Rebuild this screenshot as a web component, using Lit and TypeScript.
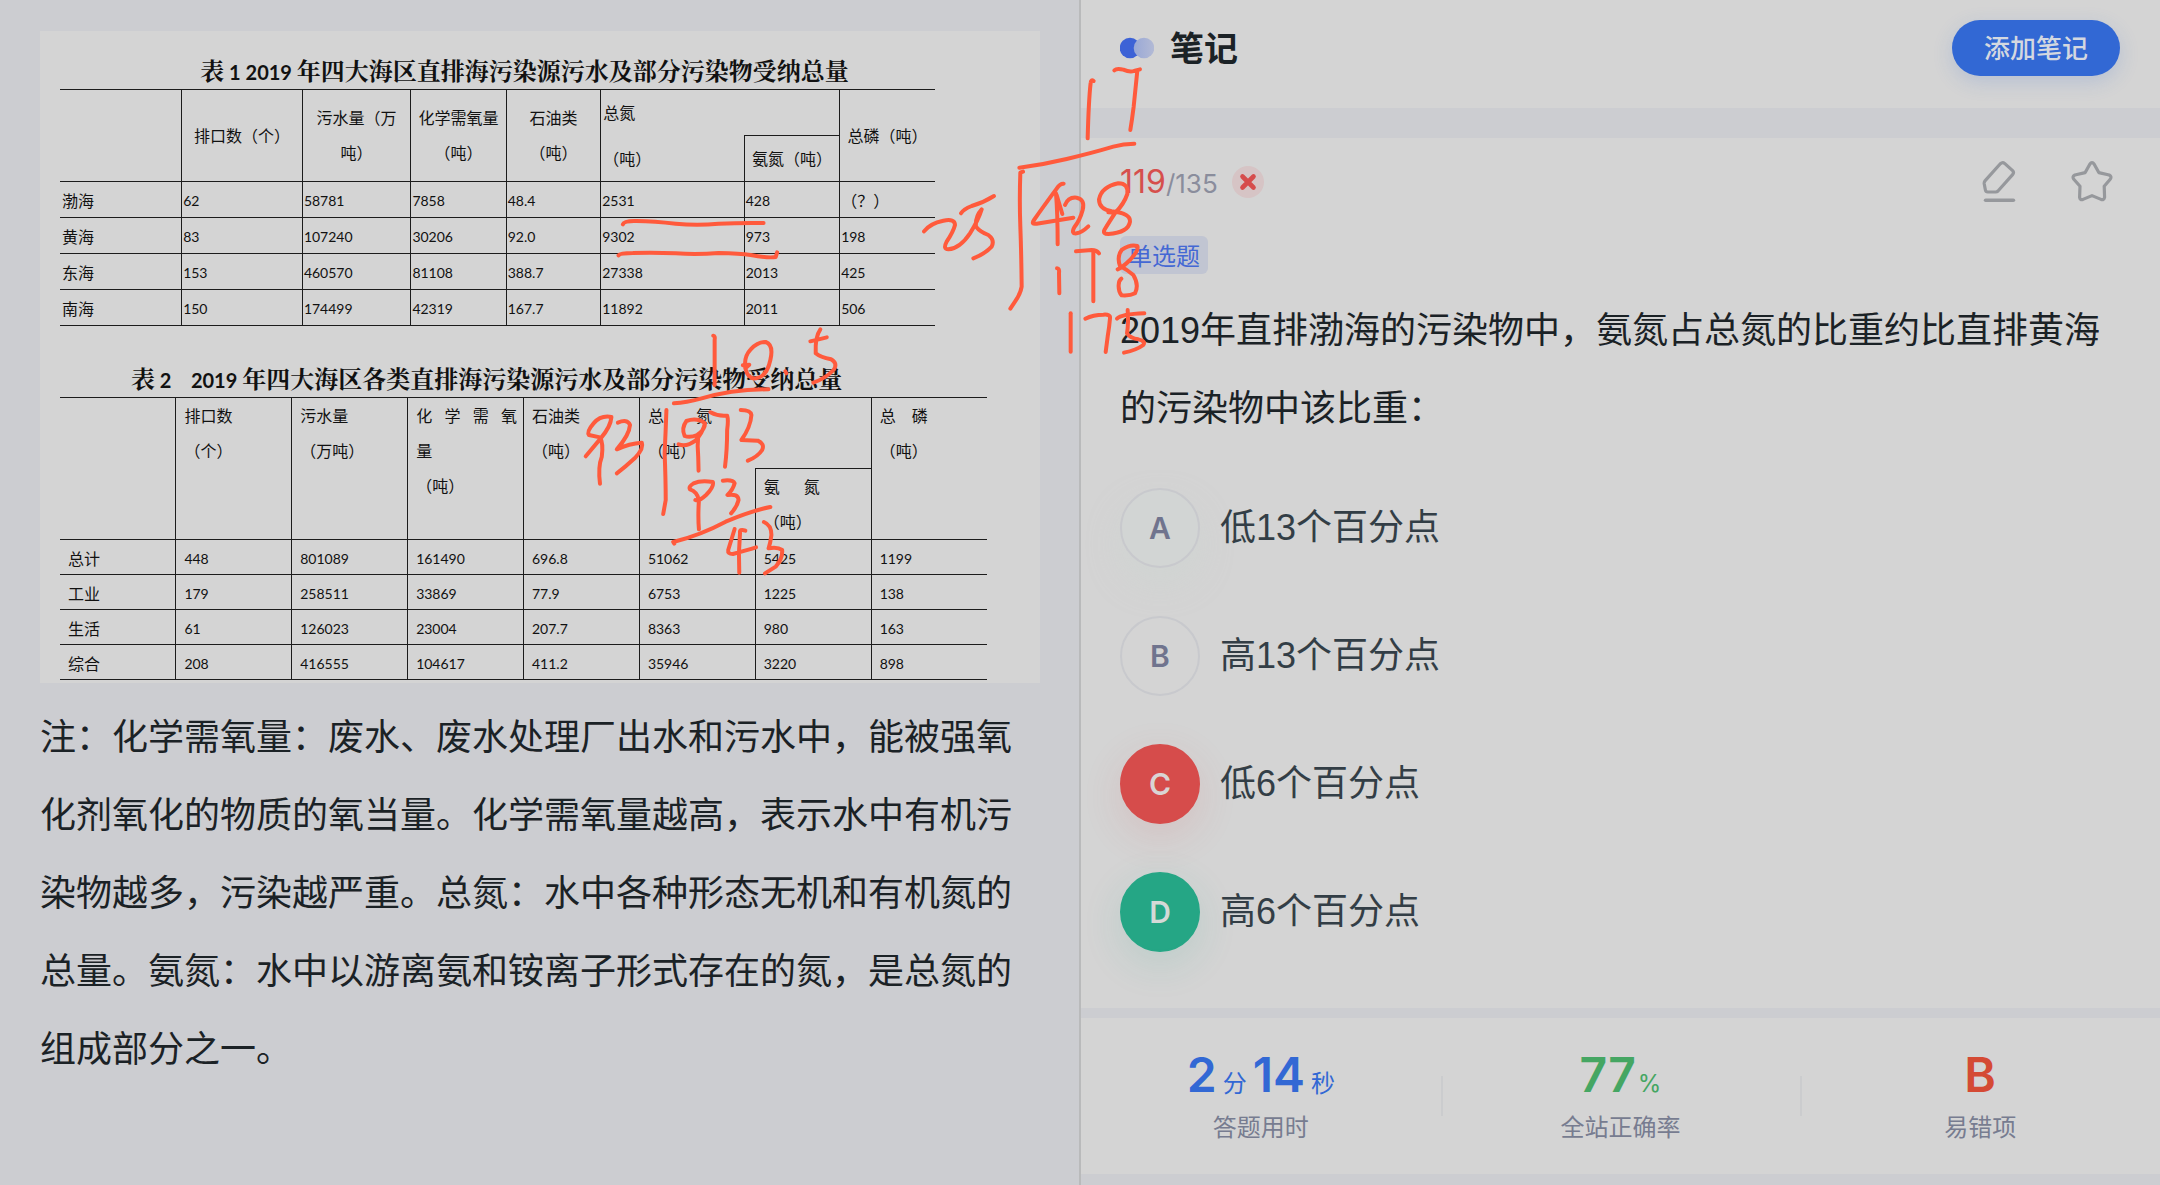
import { LitElement, html, css, svg } from "lit";
import { customElement, property } from "lit/decorators.js";

type Row = [string, ...string[]];

const seaRows: Row[] = [
  ["渤海", "62", "58781", "7858", "48.4", "2531", "428", "（？）"],
  ["黄海", "83", "107240", "30206", "92.0", "9302", "973", "198"],
  ["东海", "153", "460570", "81108", "388.7", "27338", "2013", "425"],
  ["南海", "150", "174499", "42319", "167.7", "11892", "2011", "506"],
];

const sourceRows: Row[] = [
  ["总计", "448", "801089", "161490", "696.8", "51062", "5425", "1199"],
  ["工业", "179", "258511", "33869", "77.9", "6753", "1225", "138"],
  ["生活", "61", "126023", "23004", "207.7", "8363", "980", "163"],
  ["综合", "208", "416555", "104617", "411.2", "35946", "3220", "898"],
];

const bodyRows = (rows: Row[]) =>
  rows.map(
    ([name, ...values]) => html`<tr>
      <th scope="row" class="name">${name}</th>
      ${values.map((v) => html`<td class=${/\d/.test(v) ? "num" : "name"}>${v}</td>`)}
    </tr>`
  );

@customElement("material-panel")
export class MaterialPanel extends LitElement {
  static styles = css`
    :host {
      display: block;
      padding: 31px 40px 0 40px;
      background: #cccdd1;
      color: #1b2226;
    }
    .sheet {
      background: #d4d4d4;
      padding: 14px 53px 3px 20px;
      color: #111;
    }
    table {
      border-collapse: collapse;
      table-layout: fixed;
      width: 100%;
      font: 400 16px/35px Lato, "Noto Sans CJK SC", sans-serif;
    }
    .sea {
      width: 94.4%;
    }
    caption {
      font: 700 24px/34px "Noto Serif CJK SC", "Noto Sans CJK SC", serif;
      white-space: pre;
    }
    .sea caption {
      padding: 8px 0 0 54px;
    }
    .source caption {
      padding: 35px 0 0 0;
      text-align: left;
      text-indent: 71px;
    }
    .digits {
      font: 700 20px/34px Lato, sans-serif;
    }
    th,
    td {
      border: 1px solid #1c1c1c;
      padding: 0;
      font-weight: 400;
      text-align: left;
    }
    tr > :first-child {
      border-left: 0;
    }
    tr > .edge,
    tbody tr > :last-child {
      border-right: 0;
    }
    .center {
      text-align: center;
    }
    .sea .total {
      border-bottom: 0;
      padding: 0 0 0 2px;
      height: 45px;
    }
    .sea .unit {
      border-top: 0;
      border-left: 1px solid #1c1c1c;
      padding-left: 2px;
      height: 45px;
    }
    .sea td {
      padding: 4px 0 0 1px;
      height: 31px;
    }
    .sea .name {
      padding-top: 4px;
    }
    .sea th.name {
      padding-left: 2px;
    }
    .num {
      font-size: 14px;
      line-height: 24px;
    }
    .name {
      line-height: 24px;
    }
    .source th,
    .source td {
      padding: 0 0 0 8px;
      vertical-align: top;
    }
    .source tbody th,
    .source tbody td {
      padding-top: 4px;
      height: 30px;
      vertical-align: middle;
    }
    .source .total {
      border-bottom: 0;
      height: 69px;
    }
    .source .void {
      border-top: 0;
      border-left: 1px solid #1c1c1c;
    }
    .spread {
      display: block;
      text-align-last: justify;
      margin-right: 6px;
    }
    .note {
      margin: 12px 0 0;
      font: 400 36px/78px "Noto Sans CJK SC", sans-serif;
    }
  `;

  render() {
    return html`
      <div class="sheet">
        <table class="sea">
          <caption>表<span class="digits"> 1 2019 </span>年四大海区直排海污染源污水及部分污染物受纳总量</caption>
          <colgroup>
            <col style="width:13.9%" /><col style="width:13.8%" /><col style="width:12.4%" />
            <col style="width:10.9%" /><col style="width:10.8%" /><col style="width:16.4%" />
            <col style="width:10.9%" /><col style="width:10.9%" />
          </colgroup>
          <thead>
            <tr>
              <th rowspan="2"></th>
              <th rowspan="2" class="center">排口数（个）</th>
              <th rowspan="2" class="center">污水量（万<br />吨）</th>
              <th rowspan="2" class="center">化学需氧量<br />（吨）</th>
              <th rowspan="2" class="center">石油类<br />（吨）</th>
              <th colspan="2" class="total">总氮</th>
              <th rowspan="2" class="center edge">总磷（吨）</th>
            </tr>
            <tr>
              <th class="unit">（吨）</th>
              <th class="center">氨氮（吨）</th>
            </tr>
          </thead>
          <tbody>
            ${bodyRows(seaRows)}
          </tbody>
        </table>
        <table class="source">
          <caption>表<span class="digits"> 2    2019 </span>年四大海区各类直排海污染源污水及部分污染物受纳总量</caption>
          <thead>
            <tr>
              <th rowspan="2"></th>
              <th rowspan="2">排口数<br />（个）</th>
              <th rowspan="2">污水量<br />（万吨）</th>
              <th rowspan="2"><span class="spread">化 学 需 氧</span>量<br />（吨）</th>
              <th rowspan="2">石油类<br />（吨）</th>
              <th colspan="2" class="total">总　　氮<br />（吨）</th>
              <th rowspan="2" class="edge">总　磷<br />（吨）</th>
            </tr>
            <tr>
              <th class="void"></th>
              <th>氨　&ensp;氮<br />（吨）</th>
            </tr>
          </thead>
          <tbody>
            ${bodyRows(sourceRows)}
          </tbody>
        </table>
      </div>
      <p class="note">
        注：化学需氧量：废水、废水处理厂出水和污水中，能被强氧化剂氧化的物质的氧当量。化学需氧量越高，表示水中有机污染物越多，污染越严重。总氮：水中各种形态无机和有机氮的总量。氨氮：水中以游离氨和铵离子形式存在的氮，是总氮的组成部分之一。
      </p>
    `;
  }
}

@customElement("answer-option")
export class AnswerOption extends LitElement {
  @property() letter = "";
  @property() label = "";
  @property({ reflect: true }) state = "";

  static styles = css`
    :host {
      display: block;
    }
    button {
      display: flex;
      align-items: center;
      gap: 20px;
      width: 100%;
      padding: 0;
      border: 0;
      background: none;
      text-align: left;
      color: #333e46;
      font: 400 36px/80px "Liberation Sans", "Noto Sans CJK SC", sans-serif;
    }
    .disc {
      box-sizing: border-box;
      width: 80px;
      height: 80px;
      border: 2px solid #c8c9cd;
      border-radius: 50%;
      text-align: center;
      color: #70748e;
      font: 600 30px/76px Inter, sans-serif;
    }
    :host([state="plain"]) .disc {
      background: #d2d5d4;
      box-shadow: 0 16px 30px rgba(205, 213, 209, 0.5);
    }
    :host([state="wrong"]) .disc {
      border-color: #d64c4b;
      background: #d64c4b;
      color: #d9d4d4;
      box-shadow: 0 12px 40px rgba(214, 76, 75, 0.14);
    }
    :host([state="right"]) .disc {
      border-color: #25a685;
      background: #25a685;
      color: #d4d9d7;
      box-shadow: 0 12px 40px rgba(37, 166, 133, 0.14);
    }
  `;

  render() {
    return html`<button type="button"><span class="disc">${this.letter}</span><span>${this.label}</span></button>`;
  }
}

@customElement("question-panel")
export class QuestionPanel extends LitElement {
  static styles = css`
    :host {
      display: flex;
      flex-direction: column;
      margin-left: -1px;
      background: #cccdd1;
      border-left: 2px solid #b9babb;
      color: #1b2226;
      font-family: "Liberation Sans", "Noto Sans CJK SC", sans-serif;
    }
    header {
      display: flex;
      align-items: center;
      gap: 16px;
      padding: 0 40px 12px 39px;
      height: 96px;
      background: #d4d4d4;
    }
    h1 {
      flex: 1;
      margin: 0;
      padding-bottom: 2px;
      font: 700 34px/48px "Noto Sans CJK SC", sans-serif;
    }
    .add {
      width: 168px;
      height: 56px;
      padding: 0 0 2px;
      border: 0;
      border-radius: 28px;
      background: #3268d4;
      color: #d4d8e0;
      font: 500 26px/54px "Noto Sans CJK SC", sans-serif;
      box-shadow: 0 6px 20px rgba(50, 104, 212, 0.18);
    }
    .question {
      flex: 1;
      margin-top: 30px;
      padding: 20px 40px 0 39px;
      background: #d4d4d4;
    }
    .top {
      display: flex;
      align-items: center;
      height: 48px;
      padding-right: 4px;
    }
    .count {
      margin-right: 14px;
      padding-top: 2px;
      color: #8a8d9c;
      font: 400 26px/48px Inter, sans-serif;
    }
    .current {
      color: #d64f4c;
      font-size: 32px;
    }
    .spacer {
      flex: 1;
    }
    .icon {
      display: block;
      padding: 0;
      border: 0;
      background: none;
      height: 44px;
    }
    .icon + .icon {
      margin-left: 51px;
    }
    svg {
      display: block;
    }
    .tag {
      display: inline-block;
      margin-top: 30px;
      padding: 0 8px;
      border-radius: 6px;
      background: #c1c5d2;
      color: #4468d4;
      font: 400 24px/38px "Noto Sans CJK SC", sans-serif;
      vertical-align: top;
    }
    .stem {
      margin: 18px 0 40px;
      font-size: 36px;
      line-height: 78px;
    }
    .options {
      display: grid;
      gap: 48px;
    }
    .stats {
      display: grid;
      grid-template-columns: repeat(3, 1fr);
      margin: 10px 0 11px;
      padding: 24px 0 30px;
      background: #d4d4d4;
      text-align: center;
    }
    .stat {
      display: grid;
      align-content: start;
      position: relative;
    }
    .stat + .stat::before {
      content: "";
      position: absolute;
      left: 0;
      top: 34px;
      width: 2px;
      height: 40px;
      background: #cbccce;
    }
    .value {
      font: 600 48px/66px Inter, "Noto Sans CJK SC", sans-serif;
    }
    .unit {
      font: 400 24px/30px Inter, "Noto Sans CJK SC", sans-serif;
      margin: 0 6px;
    }
    .percent {
      margin: 0 0 0 2px;
    }
    .last {
      margin-right: 0;
    }
    .time {
      color: #3268d4;
    }
    .rate {
      color: #45a663;
    }
    .trap {
      color: #d44a34;
    }
    .label {
      color: #777c90;
      font: 400 24px/36px "Noto Sans CJK SC", sans-serif;
    }
  `;

  render() {
    return html`
      <header>
        <svg width="34" height="22" viewBox="0 0 34 22" aria-hidden="true">
          <defs>
            <linearGradient id="fade">
              <stop offset="0" stop-color="#99a8d6" />
              <stop offset="1" stop-color="#b3bad5" />
            </linearGradient>
          </defs>
          <circle cx="10" cy="11" r="10.3" fill="#3d62d6" />
          <circle cx="24" cy="11" r="10.3" fill="url(#fade)" />
        </svg>
        <h1>笔记</h1>
        <button class="add" type="button">添加笔记</button>
      </header>
      <section class="question">
        <div class="top">
          <span class="count"><span class="current">119</span>/135</span>
          <svg width="32" height="32" viewBox="0 0 32 32" aria-hidden="true">
            <circle cx="16" cy="16" r="16" fill="#d6c4c5" />
            <path d="M10.5 10.5 21.5 21.5M21.5 10.5 10.5 21.5" stroke="#d64c4c" stroke-width="4.6" stroke-linecap="round" />
          </svg>
          <span class="spacer"></span>
          <button class="icon" type="button" aria-label="草稿">
            <svg width="36" height="44" viewBox="0 0 36 44" fill="none" stroke="#96989c" stroke-width="3.2" stroke-linejoin="round" stroke-linecap="round">
              <path d="M19.3 3.8 Q21.6 1.8 23.6 3.4 L31.6 10.6 Q33.4 12.6 31.6 14.6 L17 31 Q16 32 14.6 32 H6.8 Q4.8 32 4.4 30 L3.2 23.8 Q3 22 4.2 20.6 Z" />
              <path d="M4.6 40.2H32.4" stroke-width="3.6" />
            </svg>
          </button>
          <button class="icon" type="button" aria-label="收藏">
            <svg width="48" height="44" viewBox="0 0 48 44" fill="none" stroke="#96989c" stroke-width="3.2" stroke-linejoin="round">
              <path d="M21.8 4.2 Q24 1.2 26.2 4.2 L30.8 12.6 L41.2 15 Q44 16.4 42.4 19 L36.2 26.2 L36.6 37.2 Q36 40.4 33 39.4 L24 35.6 L15 39.4 Q12 40.4 11.6 37.2 L12 26.2 L5.6 19 Q4 16.4 6.8 15 L17.2 12.6 Z" />
            </svg>
          </button>
        </div>
        <span class="tag">单选题</span>
        <p class="stem">2019年直排渤海的污染物中，氨氮占总氮的比重约比直排黄海的污染物中该比重：</p>
        <div class="options">
          <answer-option letter="A" label="低13个百分点" state="plain"></answer-option>
          <answer-option letter="B" label="高13个百分点"></answer-option>
          <answer-option letter="C" label="低6个百分点" state="wrong"></answer-option>
          <answer-option letter="D" label="高6个百分点" state="right"></answer-option>
        </div>
      </section>
      <section class="stats">
        <div class="stat">
          <span class="value time">2<span class="unit">分</span>14<span class="unit last">秒</span></span>
          <span class="label">答题用时</span>
        </div>
        <div class="stat">
          <span class="value rate">77<span class="unit percent">%</span></span>
          <span class="label">全站正确率</span>
        </div>
        <div class="stat">
          <span class="value trap">B</span>
          <span class="label">易错项</span>
        </div>
      </section>
    `;
  }
}

/* Pen strokes, grouped by the region of the canvas they were drawn in. */
const divisionBy25 = [
  "M581 123 Q573 117 572 128 Q566 180 563 295",
  "M643 91 Q650 84 670 89 Q690 98 702 93 L720 88 M712 92 Q707 140 701 200 Q696 240 691 270",
  "M358 383 Q430 374 500 357 Q580 338 640 320 Q670 311 703 311",
  "M369 395 L361 398 Q358 480 361 560 Q364 640 365 740 Q362 760 345 785 L331 806",
  "M491 431 Q480 430 470 446 Q430 500 402 540 Q392 554 410 551 L520 533 M468 460 Q473 520 473 613 M470 465 L487 522",
  "M495 495 Q505 470 530 473 Q556 478 548 510 Q540 540 523 562 Q512 582 530 580 Q545 578 565 559",
  "M625 517 L646 518 Q672 492 682 462 Q686 430 655 430 Q605 440 597 478 Q597 508 635 514 Q692 520 690 545 Q685 578 625 582 Q608 582 613 570 Q625 550 646 518",
  "M72 574 Q90 550 130 542 Q165 535 165 555 Q160 575 140 605 Q128 628 145 628 Q180 625 210 580 Q235 540 245 508 Q225 530 228 560 Q240 575 265 585 Q285 600 275 620 Q255 642 220 655",
  "M183 520 Q190 508 215 498 Q250 488 282 468",
  "M471 685 Q479 685 477 700 L478 760",
  "M528 634 L575 630 Q590 630 597 640 M580 635 L580 784",
  "M653 688 Q668 682 690 660 Q718 630 712 618 Q690 612 665 630 Q650 650 660 678 Q680 688 700 705 Q718 735 705 760 Q690 768 665 766 Q655 755 656 735 Q656 722 664 716",
  "M512 820 L512 935",
  "M556 836 Q580 824 610 824 Q632 822 630 835 Q628 860 623 890 L617 936",
  "M651 836 Q665 822 733 820 M683 810 Q686 850 681 880 Q690 895 715 898 Q738 903 730 915 Q710 930 672 938",
];
const underlines = [
  "M232 673 Q235 662 270 663 Q320 664 380 671 Q440 677 500 671 Q560 668 626 669",
  "M220 766 Q225 759 260 759 Q320 757 380 760 Q440 764 500 759 Q560 760 590 765 Q640 775 660 771 L664 757",
];
const divisionBy93 = [
  "M485 47 Q491 48 489 60 L489 195",
  "M568 136 L586 134 L575 145 Q570 110 590 88 Q610 65 632 66 Q655 75 645 120 Q635 170 605 175 Q582 178 575 145",
  "M687 154 L690 160",
  "M757 64 L803 52 M785 28 Q770 50 772 100 Q785 112 815 118 Q835 130 822 150 Q800 175 765 188",
  "M375 250 Q410 248 450 236 Q540 208 640 208",
  "M200 291 Q170 285 150 310 Q130 335 137 345 L168 352 Q178 370 173 410 Q162 440 168 491 M200 291 Q198 320 170 355 L128 409",
  "M218 308 Q245 296 252 315 Q250 345 215 388 Q250 370 285 368 Q292 385 265 415 Q240 440 215 460",
  "M354 270 Q352 330 349 400 Q352 480 352 540 L345 582",
  "M462 310 Q440 292 410 303 Q395 325 405 348 Q420 354 440 345 Q462 330 462 310 Q455 340 435 362 Q410 382 388 373 M443 345 Q440 380 443 410 L444 452",
  "M477 277 Q500 290 524 287 Q528 300 524 330 Q524 390 518 440",
  "M562 270 Q590 270 592 285 Q590 320 564 360 L610 362 Q630 372 622 390 Q610 410 582 422",
  "M435 540 Q445 545 465 525 Q488 500 484 486 Q450 480 430 490 Q415 500 420 508 Q440 515 445 540 Q442 590 445 628",
  "M512 482 Q540 478 545 490 Q540 510 525 525 Q555 520 556 540 Q552 560 535 580",
  "M376 671 L373 666 Q450 645 520 605 Q590 573 645 561",
  "M545 627 L527 690 Q525 702 540 702 Q580 690 605 682 M575 632 Q558 625 560 640 Q555 700 558 758",
  "M627 606 Q648 615 648 645 Q645 670 640 685 Q665 680 678 690 Q680 715 660 740 L630 760",
];
const strokes = (paths: string[]) => paths.map((d) => svg`<path class="ink" d=${d} />`);

@customElement("app-root")
export class AppRoot extends LitElement {
  static styles = css`
    :host {
      display: grid;
      grid-template-columns: 1fr 1fr;
      position: relative;
      min-height: 100vh;
      overflow: hidden;
    }
    .canvas {
      position: absolute;
      top: 0;
      left: 0;
      width: 100%;
      pointer-events: none;
    }
    .ink {
      fill: none;
      stroke: #ff5a3c;
      stroke-width: 4px;
      stroke-linecap: round;
      stroke-linejoin: round;
      vector-effect: non-scaling-stroke;
    }
  `;

  render() {
    return html`
      <material-panel></material-panel>
      <question-panel></question-panel>
      <svg class="canvas" viewBox="0 0 2160 1185" aria-hidden="true">
        <g transform="translate(900 40) scale(.33333)">${strokes(divisionBy25)}</g>
        <g transform="translate(540 0) scale(.35714 .33333)">${strokes(underlines)}</g>
        <g transform="translate(540 320) scale(.35714 .33333)">${strokes(divisionBy93)}</g>
      </svg>
    `;
  }
}
